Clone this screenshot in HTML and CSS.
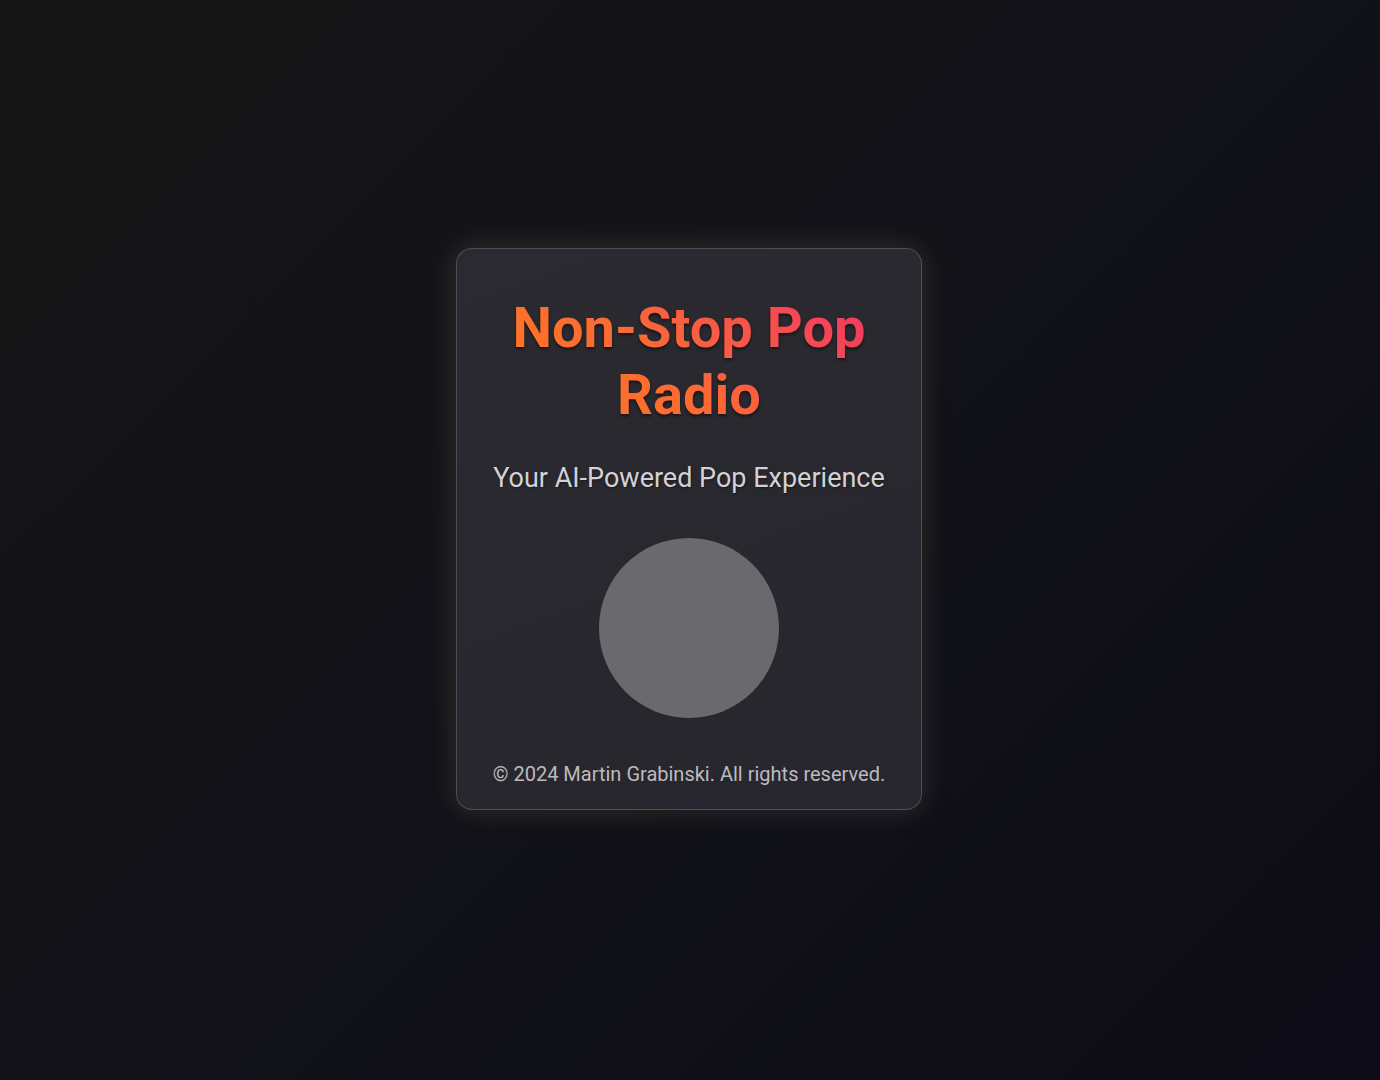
FILE: index.html
```html
<!DOCTYPE html>
<html lang="en">
<head>
<meta charset="utf-8">
<title>Non-Stop Pop Radio</title>
<link rel="stylesheet" href="styles.css">
</head>
<body>
<main class="card">
  <h1 class="title">Non-Stop Pop Radio</h1>
  <p class="subtitle">Your AI-Powered Pop Experience</p>
  <div class="player"></div>
  <p class="footer">© 2024 Martin Grabinski. All rights reserved.</p>
</main>
</body>
</html>
```

FILE: styles.css
```css
html, body {
  margin: 0;
  padding: 0;
}
body {
  min-height: 100vh;
  box-sizing: border-box;
  padding-bottom: 22px;
  padding-right: 2px;
  display: flex;
  align-items: center;
  justify-content: center;
  background: linear-gradient(135deg, #161616 0%, #121219 50%, #0d0c16 100%);
  font-family: Roboto, "Liberation Sans", sans-serif;
}
.card {
  width: 466px;
  box-sizing: border-box;
  padding: 46px 20px 23px;
  display: flex;
  flex-direction: column;
  align-items: center;
  background: linear-gradient(160deg, #2b2a30 0%, #27262e 100%);
  border: 1.5px solid rgba(255, 255, 255, 0.18);
  border-radius: 16px;
  box-shadow: 0 0 28px rgba(255, 215, 170, 0.15);
}
.title {
  margin: 0;
  font-size: 56px;
  font-weight: 700;
  line-height: 67px;
  text-align: center;
  background: linear-gradient(45deg, #ff7a1e 0%, #fb6a34 45%, #f0306a 100%);
  -webkit-background-clip: text;
  background-clip: text;
  color: transparent;
  filter: drop-shadow(0 2px 1.5px rgba(0, 0, 0, 0.5));
}
.subtitle {
  margin: 33px 0 0;
  font-size: 27px;
  line-height: 32px;
  color: #d2d2d6;
  text-shadow: 1px 1px 2px rgba(0, 0, 0, 0.4);
}
.player {
  margin-top: 44px;
  width: 180px;
  height: 180px;
  border-radius: 50%;
  background: #6a696e;
}
.footer {
  margin: 44px 0 0;
  font-size: 20px;
  line-height: 24px;
  color: #bbbbbf;
}
```
